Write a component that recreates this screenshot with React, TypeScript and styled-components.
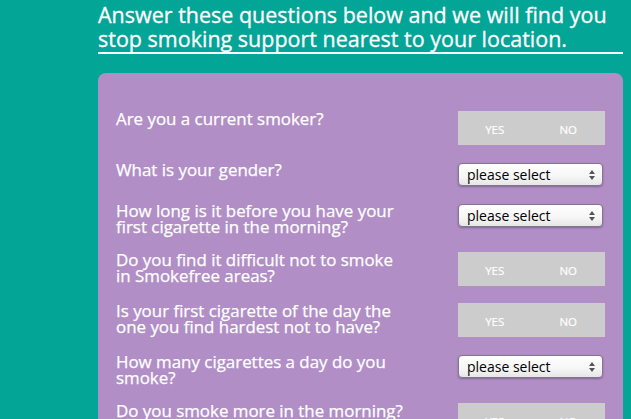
import React from "react";
import styled, { createGlobalStyle } from "styled-components";

const GlobalStyle = createGlobalStyle`
  html, body {
    margin: 0;
    padding: 0;
    background-color: #03a597;
    font-family: "Open Sans", "Liberation Sans", sans-serif;
    overflow: hidden;
  }
`;

const Page = styled.main`
  padding: 3px 8px 0 98px;
  width: 525px;
`;

const Intro = styled.h2`
  margin: 0;
  padding-bottom: 1px;
  font-size: 21.5px;
  line-height: 24px;
  font-weight: 400;
  color: #ffffff;
  -webkit-text-stroke: 0.3px #ffffff;
  border-bottom: 2px solid #ffffff;
`;

const FormPanel = styled.form`
  margin-top: 19px;
  padding: 38px 18px 40px 18px;
  background-color: #b18fc6;
  border-radius: 8px 8px 0 0;
  display: flex;
  flex-direction: column;
  gap: 17px;
`;

const QuestionRow = styled.div`
  display: flex;
  justify-content: space-between;
  align-items: flex-start;
`;

const Label = styled.label`
  flex: 0 0 290px;
  font-size: 16.9px;
  line-height: 16px;
  color: #ffffff;
  -webkit-text-stroke: 0.25px #ffffff;
`;

const Toggle = styled.div`
  display: flex;
  width: 147px;
  height: 34px;
  background-color: #cccccc;
`;

const ToggleOption = styled.button`
  flex: 1;
  border: none;
  background: transparent;
  padding: 2px 0 0 0;
  color: #ffffff;
  font-family: "Open Sans", "Liberation Sans", sans-serif;
  font-size: 11.5px;
  text-transform: uppercase;
  -webkit-text-stroke: 0.2px #ffffff;
  cursor: pointer;
`;

const SelectWrap = styled.div`
  position: relative;
  width: 145px;
  height: 23px;
  margin-top: 1px;
  margin-right: 2px;
`;

const Select = styled.select`
  appearance: none;
  width: 100%;
  height: 100%;
  padding: 0 20px 0 8px;
  border: 1px solid #85748f;
  border-radius: 4px;
  background: linear-gradient(#ffffff, #f6f6f6 60%, #e6e6e6);
  box-shadow: 0 1px 2px rgba(60, 40, 80, 0.4);
  font-family: "Open Sans", "Liberation Sans", sans-serif;
  font-size: 14px;
  color: #000000;
`;

const Arrows = styled.svg`
  position: absolute;
  right: 8px;
  top: 7px;
  pointer-events: none;
`;

type Question = { text: string; kind: "yesno" | "select" };

const questions: Question[] = [
  { text: "Are you a current smoker?", kind: "yesno" },
  { text: "What is your gender?", kind: "select" },
  { text: "How long is it before you have your first cigarette in the morning?", kind: "select" },
  { text: "Do you find it difficult not to smoke in Smokefree areas?", kind: "yesno" },
  { text: "Is your first cigarette of the day the one you find hardest not to have?", kind: "yesno" },
  { text: "How many cigarettes a day do you smoke?", kind: "select" },
  { text: "Do you smoke more in the morning?", kind: "yesno" },
];

const Dropdown: React.FC = () => (
  <SelectWrap>
    <Select defaultValue="">
      <option value="">please select</option>
    </Select>
    <Arrows width="6" height="10" viewBox="0 0 6 10">
      <path d="M3 0 L6 4 H0 Z" fill="#555" />
      <path d="M3 10 L6 6 H0 Z" fill="#555" />
    </Arrows>
  </SelectWrap>
);

const App: React.FC = () => {
  return (
    <Page>
      <GlobalStyle />
      <Intro>
        Answer these questions below and we will find you stop smoking support nearest to your location.
      </Intro>
      <FormPanel>
        {questions.map((q) => (
          <QuestionRow key={q.text}>
            <Label>{q.text}</Label>
            {q.kind === "yesno" ? (
              <Toggle>
                <ToggleOption type="button">Yes</ToggleOption>
                <ToggleOption type="button">No</ToggleOption>
              </Toggle>
            ) : (
              <Dropdown />
            )}
          </QuestionRow>
        ))}
      </FormPanel>
    </Page>
  );
};

export default App;
